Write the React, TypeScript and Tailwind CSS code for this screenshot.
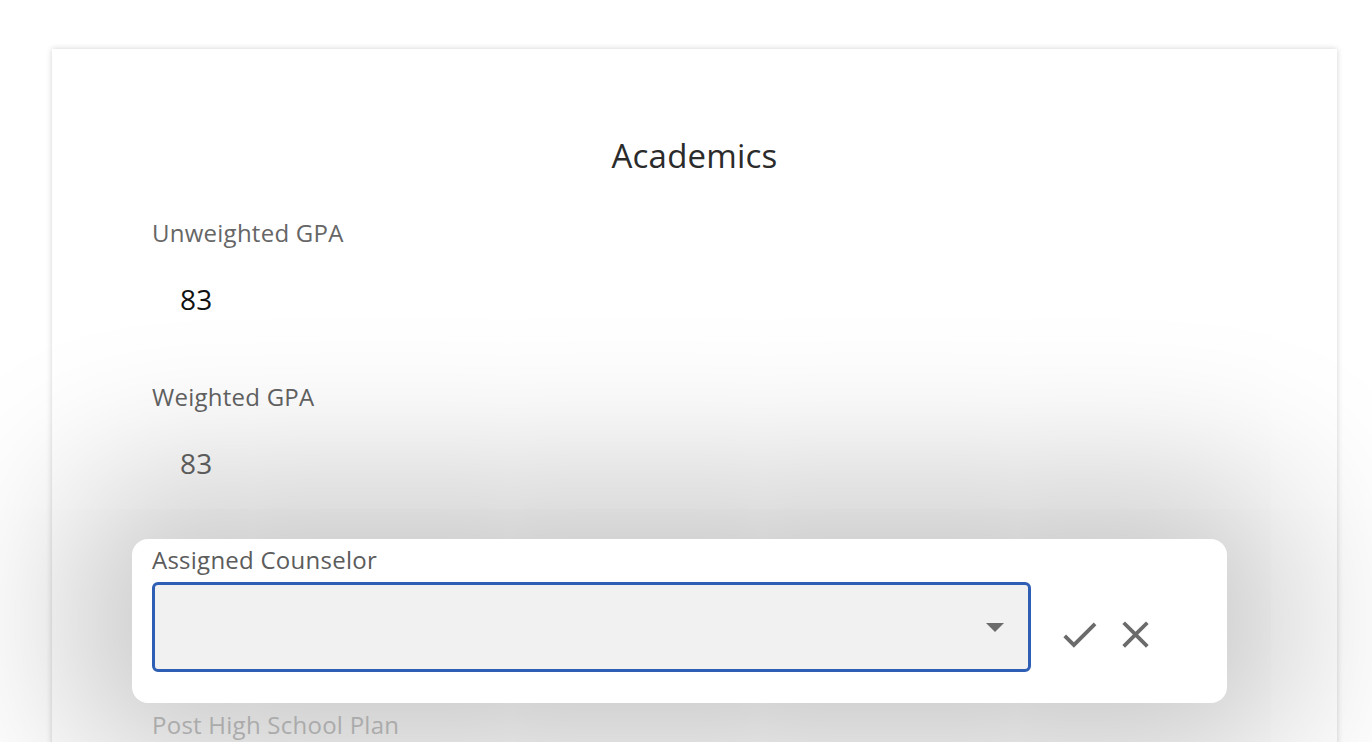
import React from "react";

const font = { fontFamily: '"Open Sans", "Noto Sans", Arial, sans-serif' };

function CheckIcon() {
  return (
    <svg width="45" height="45" viewBox="0 0 24 24" fill="#6b6b6b">
      <path d="M9 16.17L4.83 12l-1.42 1.41L9 19 21 7l-1.41-1.41z" />
    </svg>
  );
}

function CloseIcon() {
  return (
    <svg width="45" height="45" viewBox="0 0 24 24" fill="#6b6b6b">
      <path d="M19 6.41L17.59 5 12 10.59 6.41 5 5 6.41 10.59 12 5 17.59 6.41 19 12 13.41 17.59 19 19 17.59 13.41 12z" />
    </svg>
  );
}

export default function App() {
  return (
    <div className="h-[742px] w-[1372px] overflow-hidden bg-white" style={font}>
      <div className="ml-[52px] mt-[49px] h-[760px] w-[1285px] bg-white pl-[100px] pt-[85px] shadow-[0_0_6px_rgba(0,0,0,0.18)]">
        <div className="-ml-[100px] flex h-[44px] w-[1285px] items-center justify-center text-[33px] leading-[44px] tracking-[0.2px] text-[#2b2b2b]">
          Academics
        </div>

        <div className="mt-[39px] h-[32px] text-[24px] leading-[32px] tracking-[0.25px] text-[#666666]">Unweighted GPA</div>
        <div className="mt-[30px] h-[40px] pl-[28px] text-[28px] leading-[40px] tracking-[0.3px] text-[#111111]">83</div>

        <div className="mt-[62px] h-[32px] text-[24px] leading-[32px] tracking-[0.25px] text-[#5f5f5f]">Weighted GPA</div>
        <div className="mt-[30px] h-[40px] pl-[28px] text-[28px] leading-[40px] tracking-[0.3px] text-[#5a5a5a]">83</div>

        <div className="-ml-[20px] mt-[56px] w-[1095px] rounded-[16px] bg-white px-[20px] pb-[31px] pt-[5px] shadow-[0_0_160px_60px_rgba(0,0,0,0.22)]">
          <div className="h-[32px] text-[24px] leading-[32px] tracking-[0.25px] text-[#5c5c5c]">Assigned Counselor</div>
          <div className="mt-[6px] flex items-start">
            <div className="flex h-[90px] w-[879px] items-center justify-end rounded-[6px] border-[3px] border-[#2e5fb4] bg-[#f1f1f1] pr-[24px]">
              <svg width="18" height="9" viewBox="0 0 18 9">
                <path d="M0 0 L18 0 L9 9 Z" fill="#6b6b6b" />
              </svg>
            </div>
            <div className="ml-[26px] mt-[30px] flex items-center gap-[11px]">
              <CheckIcon />
              <CloseIcon />
            </div>
          </div>
        </div>

        <div className="mt-[6px] h-[32px] text-[24px] leading-[32px] tracking-[0.25px] text-[#ababab]">Post High School Plan</div>
      </div>
    </div>
  );
}
